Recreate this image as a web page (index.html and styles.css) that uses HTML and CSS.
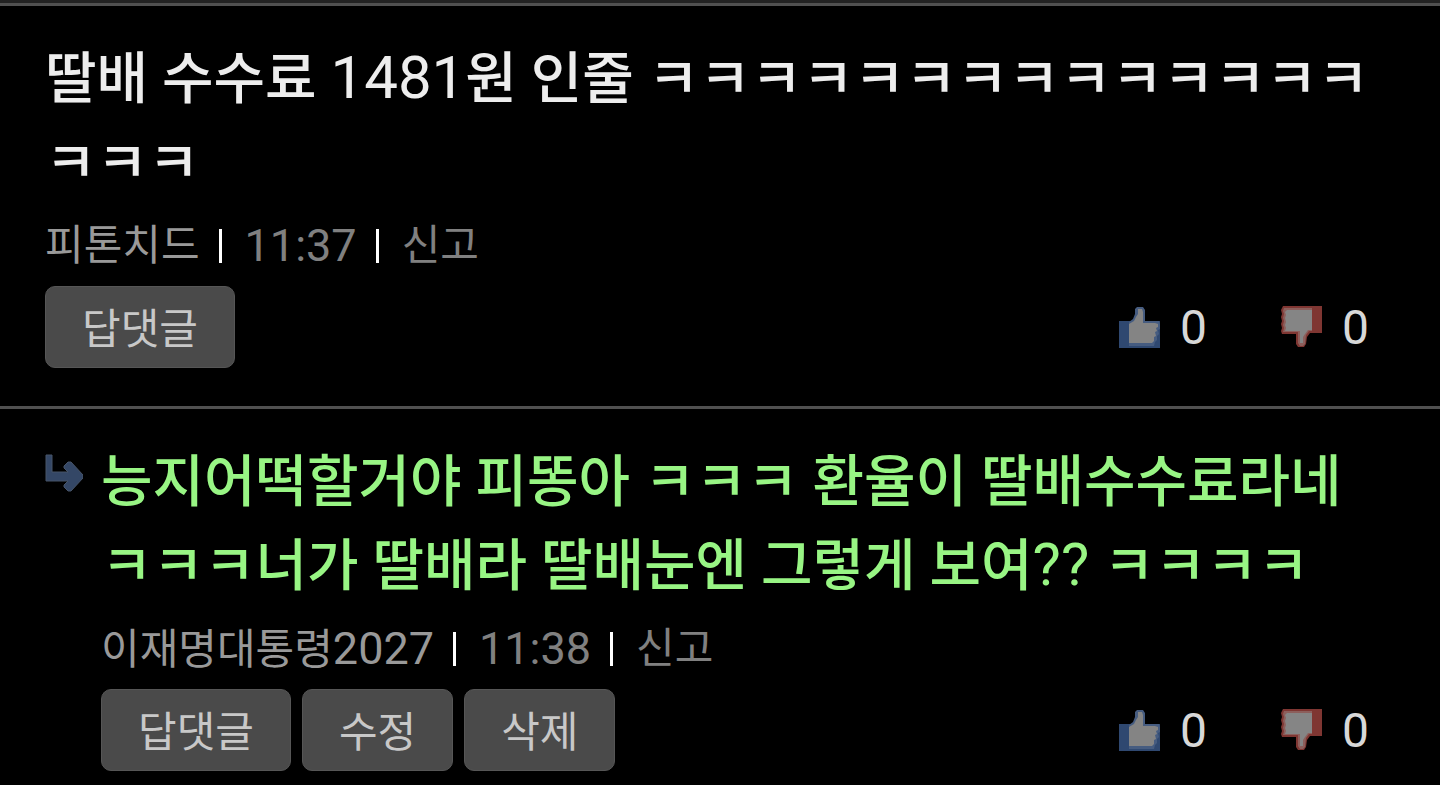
FILE: index.html
```html
<!DOCTYPE html>
<html lang="ko">
<head>
  <meta charset="utf-8">
  <meta name="viewport" content="width=device-width, initial-scale=1">
  <title>댓글</title>
  <link rel="stylesheet" href="styles.css">
</head>
<body>
  <!-- shared vote icons -->
  <svg class="sprite" aria-hidden="true">
    <symbol id="up" viewBox="0 0 41 42">
      <path fill="#2f4870" d="M0 15h41v27H0z"/>
      <path fill="#465c80" d="M10 16l4-3 2-5V3l2-2h6l2 3v11h14l1 3v5l-2 1 1 4-2 2v4l-2 2-1 4H10z"/>
      <path fill="#848484" d="M10 18l5-3 2-4 2-3V3h4l1 3v11h12l3 1v3l-2 1 1 3-2 1 1 4-2 1v4l-2 2H10z"/>
    </symbol>
    <symbol id="down" viewBox="0 0 41 42">
      <path fill="#7f3632" d="M2 0h39v27H29l-3 4-1 7-2 3h-6l-2-3V28H1l-1-3 1-3-1-4 1-3-1-4 1-3-1-4z"/>
      <path fill="#8c5f5c" d="M3 2h28v23h-3l-3 4-1 9-2 2h-3l-2-3V26H2l1-4-1-3 1-4-1-3 1-4-1-3z"/>
      <path fill="#858585" d="M6 4h25v20h-4l-3 4-2 3v6h-3V25H4l1-3-1-3 1-3-1-4 1-3-1-3z"/>
    </symbol>
  </svg>

  <main class="comments">
    <article class="comment">
      <div class="comment-body">
        <p class="text">딸배 수수료 <span class="num">1481</span>원 인줄 ㅋㅋㅋㅋㅋㅋㅋㅋㅋㅋㅋㅋㅋㅋㅋㅋㅋ</p>
        <div class="meta">
          <span class="author">피톤치드</span>
          <span class="bar"></span>
          <time class="time">11:37</time>
          <span class="bar"></span>
          <a class="report" href="#">신고</a>
        </div>
        <div class="actions">
          <button type="button" class="btn">답댓글</button>
          <div class="votes">
            <button type="button" class="vote" aria-label="추천"><svg class="thumb"><use href="#up"/></svg>0</button>
            <button type="button" class="vote" aria-label="비추천"><svg class="thumb"><use href="#down"/></svg>0</button>
          </div>
        </div>
      </div>
    </article>

    <article class="comment reply">
      <svg class="reply-icon" viewBox="0 0 38 38" aria-hidden="true">
        <path fill="#344766" stroke="#475468" d="M1 1h6v17h16l-4-4v-2l4-4h3l12 13v3L26 37h-3l-4-4v-2l4-4H1z"/>
      </svg>
      <div class="comment-body">
        <p class="text mine">능지어떡할거야 피똥아 ㅋㅋㅋ 환율이 딸배수수료라네 ㅋㅋㅋ너가 딸배라 딸배눈엔 그렇게 보여<span class="num">??</span> ㅋㅋㅋㅋ</p>
        <div class="meta">
          <span class="author">이재명대통령<span class="num">2027</span></span>
          <span class="bar"></span>
          <time class="time">11:38</time>
          <span class="bar"></span>
          <a class="report" href="#">신고</a>
        </div>
        <div class="actions">
          <button type="button" class="btn">답댓글</button>
          <button type="button" class="btn">수정</button>
          <button type="button" class="btn">삭제</button>
          <div class="votes">
            <button type="button" class="vote" aria-label="추천"><svg class="thumb"><use href="#up"/></svg>0</button>
            <button type="button" class="vote" aria-label="비추천"><svg class="thumb"><use href="#down"/></svg>0</button>
          </div>
        </div>
      </div>
    </article>
  </main>
</body>
</html>
```

FILE: styles.css
```css
* {
  box-sizing: border-box;
}

body {
  margin: 0;
  background: #000;
  color: #ededed;
  font-family: Roboto, "Noto Sans CJK KR", sans-serif;
}

.sprite {
  display: none;
}

.comments {
  border-top: 3px solid #222;
}

.comment {
  display: flex;
  padding: 31px 45px 38px;
  border-top: 3px solid #505050;
}

.reply {
  padding-bottom: 13px;
}

.comment-body {
  flex: 1;
  min-width: 0;
}

.reply-icon {
  flex: none;
  width: 38px;
  height: 38px;
  margin: 14px 18px 0 0;
}

.text {
  margin: 0;
  font-size: 56px;
  font-weight: 500;
  line-height: 84px;
}

.text .num {
  font-size: 60px;
  font-weight: 400;
  line-height: 1;
}

.mine {
  color: #98f584;
}

.meta {
  display: flex;
  align-items: center;
  height: 81px;
  font-size: 42px;
  line-height: 81px;
  color: #808080;
}

.author {
  color: #999;
}

.author .num,
.time {
  font-size: 45px;
}

.bar {
  width: 3px;
  height: 34px;
  margin: 0 23px 0 19px;
  background: #fff;
}

.report {
  color: inherit;
  text-decoration: none;
}

.actions {
  display: flex;
  align-items: center;
  gap: 11px;
}

.btn {
  height: 82px;
  padding: 0 36px 4px;
  border: 1px solid #565656;
  border-radius: 10px;
  background: #4a4a4a;
  color: #c8c8c8;
  font-family: inherit;
  font-size: 42px;
  cursor: pointer;
}

.votes {
  display: flex;
  gap: 74px;
  margin-left: auto;
  padding-right: 26px;
}

.vote {
  display: flex;
  align-items: center;
  gap: 20px;
  padding: 0;
  border: 0;
  background: none;
  color: #d8d8d8;
  font-family: inherit;
  font-size: 48px;
  cursor: pointer;
}

.thumb {
  width: 41px;
  height: 42px;
}
```
